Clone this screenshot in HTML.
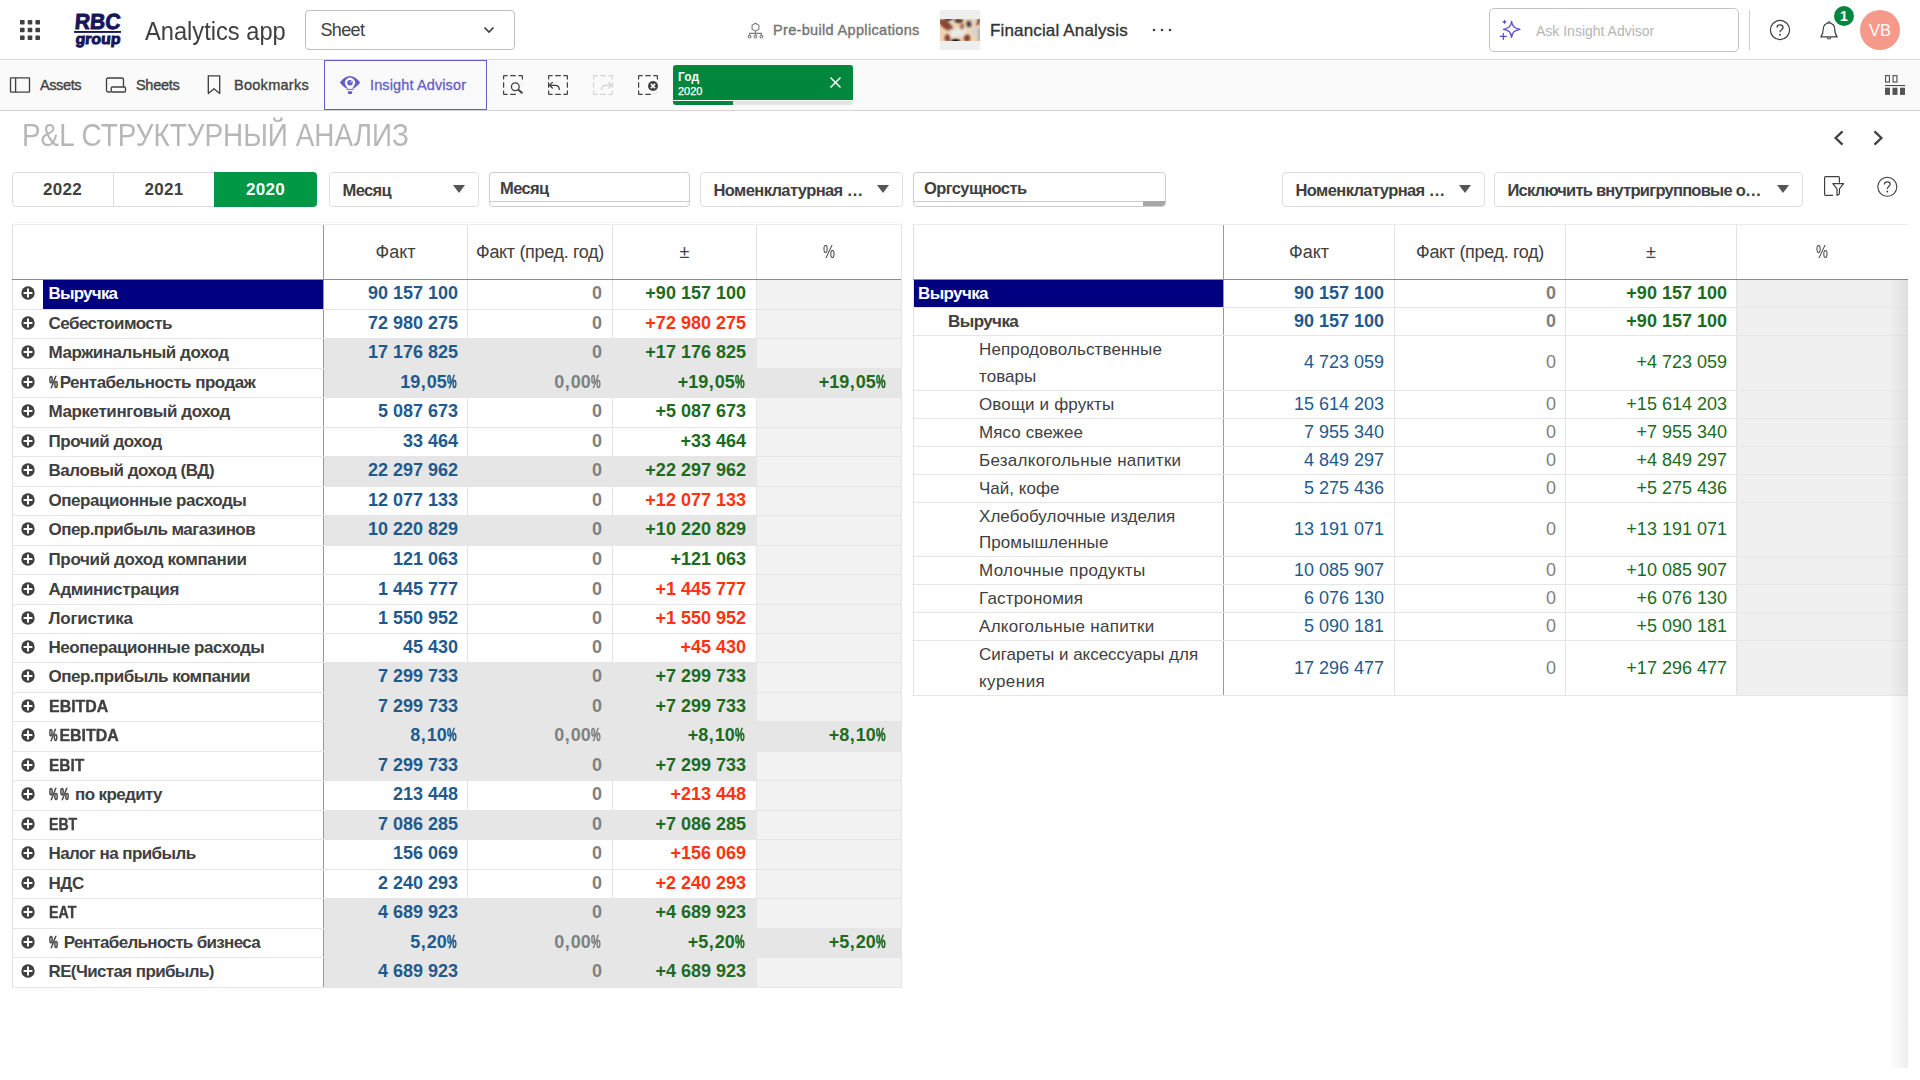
<!DOCTYPE html>
<html lang="ru"><head><meta charset="utf-8"><title>Analytics app</title>
<style>
*{box-sizing:border-box}
html,body{margin:0;padding:0}
body{width:1920px;height:1080px;overflow:hidden;background:#fff;font-family:"Liberation Sans",sans-serif;color:#404040;position:relative}
.abs{position:absolute}
/* ---------- top bar */
#topbar{position:absolute;left:0;top:0;width:1920px;height:60px;background:#fff;border-bottom:1px solid #d9d9d9}
#toolbar{position:absolute;left:0;top:60px;width:1920px;height:51px;background:#fafafa;border-bottom:1px solid #d4d4d4}
.t{position:absolute;white-space:nowrap;line-height:1}
/* ---------- tables */
.tbl{position:absolute;top:223px}
#lt{left:12px;width:890px;height:766px}
#rt{left:913px;width:995px;height:845px;overflow:hidden}
.topline{position:absolute;left:0;top:-1px;width:100%;height:1px;background:#f5f5f5}
.hdr{position:absolute;left:0;top:1px;width:100%;height:56px;border-top:1px solid #ececec;border-bottom:1px solid #8c8c8c}
.hc{position:absolute;top:0;height:54px;display:flex;align-items:center;justify-content:center;font-size:18px;color:#404040}
.hc span{position:relative;top:.5px;letter-spacing:0}
.hb{border-left:1px solid #999}
.hc:first-child{border-left:1px solid #e0e0e0}
.hb2{border-left:1px solid #e3e3e3}
.r{position:absolute;left:0;width:100%;border-bottom:1px solid #e6e6e6}
.c{position:absolute;top:0;bottom:0;padding-bottom:1px;display:flex;align-items:center;white-space:nowrap;font-size:17px}
.c i{display:inline-block;width:5px}
.lab{left:0;border-left:1px solid #e3e3e3;font-weight:bold;color:#404040}
.n1,.n2,.n3,.n4{justify-content:flex-end;font-weight:bold;font-size:18px;letter-spacing:0}
.c s,.lt s{text-decoration:none;display:inline-block;width:10.5px;transform:scaleX(.7);transform-origin:0 50%;letter-spacing:0}
.c s{width:9.6px;transform:scaleX(.6);margin-right:1.6px;-webkit-text-stroke:.55px currentColor}
.lt s{-webkit-text-stroke:.6px currentColor}
.c u{text-decoration:none;margin:0 1px 0 .6px}
.bl{color:#1f5a8e}.gr{color:#808080}.gn{color:#1d6b1d}.rd{color:#ff3311}
/* left table */
#lt .lab{width:311px}
#lt .lab .plus{position:absolute;left:7.5px;top:50%;margin-top:-7.6px;width:14px;height:14px}
#lt .lab .lt{position:absolute;left:35.5px;top:50%;margin-top:-9.6px;line-height:20px;letter-spacing:-.45px}
#lt .navy::before{content:"";position:absolute;left:30px;top:0;right:0;bottom:0;background:#000080}
#lt .navy .lt{color:#fff}
#lt .n1{left:311px;width:144px;border-left:1px solid #999;padding-right:9px}
#lt .n2{left:455px;width:145px;border-left:1px solid #e3e3e3;padding-right:10px}
#lt .n3{left:600px;width:144px;border-left:1px solid #e3e3e3;padding-right:10px}
#lt .n4{left:744px;width:146px;border-left:1px solid #e6e6e6;padding-right:15px;background:#f2f2f2}
#lt .gy .n1,#lt .gy .n2,#lt .gy .n3{background:#e6e6e6;border-left-color:#e6e6e6}
#lt .gy .n1{border-left-color:#999}
#lt .pr .n4{background:#e6e6e6}
/* right table */
#rt .lab{width:310px}
#rt .lab{padding-bottom:0}
#rt .lab .lt{position:relative;top:.5px;line-height:26.5px;font-weight:normal;white-space:nowrap}
#rt .lv0 .lab .lt{left:4px;font-weight:bold;color:#fff;letter-spacing:-.45px}
#rt .lv1 .lab .lt{left:34px;font-weight:bold;letter-spacing:-.45px}
#rt .lv2 .lab .lt{left:65px;letter-spacing:.12px}
#rt .navy{background:#000080}
#rt .n1{left:310px;width:171px;border-left:1px solid #999;padding-right:10px}
#rt .n2{left:481px;width:171px;border-left:1px solid #e3e3e3;padding-right:9px}
#rt .n3{left:652px;width:171px;border-left:1px solid #e3e3e3;padding-right:9px}
#rt .n4{left:823px;width:172px;border-left:1px solid #e3e3e3;background:#f0f0f0}
#rt .lv2 .c{font-weight:normal}
#rt .lv2 .n1,#rt .lv2 .n2,#rt .lv2 .n3{letter-spacing:0}
.shade{position:absolute;right:0;top:57px;width:20px;height:788px;background:linear-gradient(to right,rgba(0,0,0,0),rgba(0,0,0,.065))}
.sb{-webkit-text-stroke:.35px currentColor}
.sb2{-webkit-text-stroke:.3px currentColor}
.yr{font-size:17px;font-weight:bold;text-align:center;letter-spacing:.3px;color:#404040}
.dd,.lb{position:absolute;top:172px;height:35px;border:1px solid #dedede;border-radius:4px;background:#fff}
.lb{border-color:#ccc}
.dd span,.lb span{position:absolute;left:12.5px;top:8.5px;font-size:16.5px;line-height:1;font-weight:bold;color:#404040;white-space:nowrap;letter-spacing:-.6px}
.lb span{left:10px;top:6.5px}
.dd b{position:absolute;right:13.5px;top:12.3px;width:0;height:0;border-left:6px solid transparent;border-right:6px solid transparent;border-top:8px solid #555}
.lb u{position:absolute;left:0;right:0;top:28px;height:1px;background:#ccc}
.lb em{position:absolute;right:0;bottom:0;width:22px;height:5px;background:#a6a6a6;border-radius:0 0 3px 0}
.hc .fp{letter-spacing:-.33px}
.hc .pc{display:inline-block;transform:scaleX(.75)}
.c>span{position:relative}
#lt::after{content:'';position:absolute;left:889px;top:2px;width:1px;height:763px;background:#e3e3e3}

</style></head>
<body>
<div id="topbar">
  <svg class="abs" style="left:20px;top:20px" width="20" height="20" viewBox="0 0 20 20"><g fill="#404040"><rect x="0" y="0" width="4.6" height="4.6" rx=".8"/><rect x="7.7" y="0" width="4.6" height="4.6" rx=".8"/><rect x="15.4" y="0" width="4.6" height="4.6" rx=".8"/><rect x="0" y="7.7" width="4.6" height="4.6" rx=".8"/><rect x="7.7" y="7.7" width="4.6" height="4.6" rx=".8"/><rect x="15.4" y="7.7" width="4.6" height="4.6" rx=".8"/><rect x="0" y="15.4" width="4.6" height="4.6" rx=".8"/><rect x="7.7" y="15.4" width="4.6" height="4.6" rx=".8"/><rect x="15.4" y="15.4" width="4.6" height="4.6" rx=".8"/></g></svg>
  <svg class="abs" id="logo" style="left:72px;top:10px" width="52" height="40" viewBox="0 0 52 40"><g fill="#18165a" font-family="Liberation Sans, sans-serif" font-weight="bold"><text x="3.900" y="18.700" font-size="21.800" textLength="45.600" lengthAdjust="spacingAndGlyphs" stroke="#18165a" stroke-width=".95" transform="skewX(-5)">RBC</text><rect x="2.100" y="21" width="46.900" height="1.900"/><text x="6.100" y="33.700" font-size="15" textLength="45" lengthAdjust="spacingAndGlyphs" stroke="#18165a" stroke-width=".95" transform="skewX(-5)">group</text></g></svg>
  <div class="t" id="appname" style="left:145px;top:19px;font-size:25.400px;color:#404040;transform:scaleX(.932);transform-origin:0 50%">Analytics app</div>
  <div class="abs" style="left:305px;top:10px;width:210px;height:40px;border:1px solid #bfbfbf;border-radius:4px;background:#fff"></div>
  <div class="t" style="left:320.500px;top:21px;font-size:18px;color:#404040;letter-spacing:-.65px">Sheet</div>
  <svg class="abs" style="left:483px;top:25px" width="12" height="10" viewBox="0 0 12 10"><path d="M1.5 2.5L6 7l4.5-4.5" fill="none" stroke="#404040" stroke-width="1.7"/></svg>
  <svg class="abs" style="left:747px;top:22px" width="17" height="17" viewBox="0 0 17 17"><g fill="none" stroke="#7a7a7a" stroke-width="1.1"><path d="M8.5 1.2l3.4 2v3.9l-3.4 2-3.4-2V3.2z"/><path d="M8.5 9.1v2.3M2.6 13.2v-1.8h11.8v1.8M8.5 11.4v1.8"/><circle cx="2.6" cy="14.6" r="1.4"/><circle cx="8.5" cy="14.6" r="1.4"/><circle cx="14.4" cy="14.6" r="1.4"/></g></svg>
  <div class="t sb" style="left:773px;top:23px;font-size:14.5px;color:#737373;letter-spacing:.33px">Pre-build Applications</div>
  <div class="abs" style="left:940px;top:10px;width:40px;height:40px;background:#eee;border-radius:1.5px;overflow:hidden">
    <svg class="abs" style="left:0;top:9px" width="40" height="22" viewBox="0 0 40 22"><defs><filter id="bl" x="-10%" y="-10%" width="120%" height="120%"><feGaussianBlur stdDeviation=".9"/></filter><clipPath id="cp"><rect width="40" height="22"/></clipPath></defs><g clip-path="url(#cp)"><rect width="40" height="22" fill="#efd3b3"/><g filter="url(#bl)"><ellipse cx="6" cy="6" rx="8.500" ry="3.800" transform="rotate(38 6 6)" fill="#8e4533"/><ellipse cx="12" cy="11.500" rx="3.500" ry="2" transform="rotate(25 12 11.500)" fill="#a8603f"/><rect x="5" y="-1" width="8" height="2.600" fill="#2b1815"/><rect x="10" y="9.500" width="16" height="8" fill="#e9e9e9" transform="rotate(-8 18 13)"/><rect x="11.500" y="1.500" width="4" height="3" fill="#dfe3ea"/><ellipse cx="18.500" cy="1.800" rx="4.500" ry="2.300" fill="#5a3a2c"/><ellipse cx="22" cy="7.500" rx="2" ry="3.200" fill="#a56a4e"/><rect x="26.500" y="2" width="5" height="6" rx="1" fill="#4b4a47"/><rect x="31.500" y="1" width="4.500" height="3" fill="#d9d9dc"/><rect x="32" y="8" width="6" height="8" fill="#d6d3d0" transform="rotate(12 35 12)"/><rect x="38" y="9" width="2.500" height="14" fill="#a9a9a9"/><ellipse cx="38.500" cy="2.500" rx="1.600" ry="4.500" transform="rotate(20 38.500 2.500)" fill="#8a4a35"/><ellipse cx="7.500" cy="19" rx="2.900" ry="3.800" fill="#8a4232"/><ellipse cx="27" cy="19" rx="3.200" ry="3.800" fill="#8a4232"/><ellipse cx="15.500" cy="22.300" rx="4.600" ry="2.600" fill="#0b0a16"/></g></g></svg>
  </div>
  <div class="t sb" style="left:990px;top:22px;font-size:17px;color:#333;letter-spacing:.15px">Financial Analysis</div>
  <svg class="abs" style="left:1151px;top:27px" width="22" height="6" viewBox="0 0 22 6"><g fill="#404040"><circle cx="3" cy="3" r="1.3"/><circle cx="11" cy="3" r="1.3"/><circle cx="19" cy="3" r="1.3"/></g></svg>
  <div class="abs" style="left:1489px;top:8px;width:250px;height:44px;border:1px solid #c4c4c4;border-radius:5px;background:#fff"></div>
  <svg class="abs" style="left:1498px;top:18px" width="24" height="24" viewBox="0 0 24 24"><g fill="none" stroke="#5b4fc7" stroke-width="1.250" stroke-linejoin="round" stroke-linecap="round"><path d="M13.600 3.300C14.300 8.300 16.100 10.300 22 11.300C16.100 12.300 14.300 14.300 13.600 19.300C12.900 14.300 11.100 12.300 5.500 11.300C11.100 10.300 12.900 8.300 13.600 3.300Z"/><path d="M5.300 15.400v6M2.300 18.400h6"/></g><path d="M6.500 1.500l.8 1.600 1.600.8-1.600.8-.8 1.600-.8-1.600-1.600-.8 1.600-.8z" fill="#5b4fc7"/></svg>
  <div class="t" style="left:1536px;top:24px;font-size:14px;color:#b5b5b5;letter-spacing:0">Ask Insight Advisor</div>
  <div class="abs" style="left:1749px;top:10px;width:1px;height:40px;background:#d0d0d0"></div>
  <svg class="abs" style="left:1769px;top:19px" width="22" height="22" viewBox="0 0 22 22"><circle cx="11" cy="11" r="9.6" fill="none" stroke="#404040" stroke-width="1.2"/><path d="M8 8.600c0-1.700 1.300-2.700 3-2.700s3 1 3 2.500c0 2.300-3 2.300-3 4.800" fill="none" stroke="#404040" stroke-width="1.3"/><circle cx="11" cy="15.800" r=".95" fill="#404040"/></svg>
  <svg class="abs" style="left:1819px;top:19px" width="20" height="22" viewBox="0 0 20 22"><g fill="none" stroke="#404040" stroke-width="1.2" stroke-linejoin="round"><path d="M1.800 17.800c2-2.200 2.400-4.200 2.400-7.600 0-3.600 2.400-6.200 5.800-6.200s5.800 2.600 5.800 6.200c0 3.400.4 5.400 2.400 7.600z"/><path d="M8.700 4.100c0-1.800 2.600-1.800 2.600 0"/><path d="M8.200 18.200c.3 2.400 3.300 2.400 3.600 0"/></g></svg>
  <div class="abs" style="left:1834px;top:6px;width:20px;height:20px;border-radius:50%;background:#00873d"></div>
  <div class="t" style="left:1834px;top:9px;width:20px;text-align:center;font-size:14px;font-weight:bold;color:#fff">1</div>
  <div class="abs" style="left:1860px;top:10px;width:40px;height:40px;border-radius:50%;background:#f59a8a"></div>
  <div class="t" style="left:1860px;top:22px;width:40px;text-align:center;font-size:16.5px;color:#fff">VB</div>
</div>
<div id="toolbar">
  <svg class="abs" style="left:9px;top:16px" width="22" height="18" viewBox="0 0 22 18"><g fill="none" stroke="#404040" stroke-width="1.350"><rect x="1.5" y="1.900" width="19" height="14.200" rx=".5"/><path d="M6.600 1.900v14.200"/></g></svg>
  <div class="t sb" style="left:40px;top:17.500px;font-size:14.500px;color:#404040;letter-spacing:-.4px">Assets</div>
  <svg class="abs" style="left:105px;top:16px" width="22" height="18" viewBox="0 0 22 18"><g fill="none" stroke="#404040" stroke-width="1.350" stroke-linejoin="round"><path d="M5.800 16H3.200c-1 0-1.700-.7-1.700-1.700V3.700C1.500 2.700 2.200 2 3.200 2h13.600c1 0 1.700.7 1.700 1.700v7"/><rect x="6.200" y="11" width="14.300" height="5" rx="1.200"/></g></svg>
  <div class="t sb" style="left:136px;top:17.500px;font-size:14.500px;color:#404040;letter-spacing:-.3px">Sheets</div>
  <svg class="abs" style="left:206px;top:14px" width="16" height="22" viewBox="0 0 16 22"><path d="M2.300 1.800h11.400v17.800L8 14.800l-5.700 4.800z" fill="none" stroke="#404040" stroke-width="1.350" stroke-linejoin="round"/></svg>
  <div class="t sb" style="left:234px;top:17.500px;font-size:14.500px;color:#404040;letter-spacing:.27px">Bookmarks</div>
  <div class="abs" style="left:324px;top:0;width:163px;height:50px;border:1px solid #655dc6"></div>
  <svg class="abs" style="left:339px;top:15px" width="22" height="20" viewBox="0 0 22 20"><path d="M.9 7.500C3.900 3.300 7.300 1 11 1s7.100 2.300 10.200 6.500c-1.800 2.500-3.900 4.500-6.400 5.800-.4.500-.6 1.100-.7 1.700H7.900c-.1-.6-.3-1.200-.7-1.700C4.700 12 2.700 10 .9 7.500z" fill="#655dc6"/><path d="M8.700 13.800c-.2-1.300-.8-2.100-1.500-3.100a4.800 4.800 0 1 1 7.600 0c-.7 1-1.300 1.800-1.500 3.100z" fill="#fafafa" stroke="#fafafa" stroke-width=".6" stroke-linejoin="round"/><circle cx="11" cy="7.700" r="2.750" fill="#655dc6"/><path d="M11.500 7.200l1.300-1" stroke="#fafafa" stroke-width=".9" stroke-linecap="round"/><path d="M8.700 16.200h4.600l-.5 2.800H9.200z" fill="#655dc6"/></svg>
  <div class="t sb2" style="left:370px;top:18px;font-size:14.5px;color:#655dc6;letter-spacing:.12px">Insight Advisor</div>
  <svg class="abs" style="left:502px;top:14px" width="22" height="22" viewBox="0 0 22 22"><rect x="1.600" y="1.600" width="18.800" height="18.800" fill="none" stroke="#404040" stroke-width="1.200" stroke-dasharray="4 2.600 5.600 2.600 4 0"/><path d="M19.400 7.200h3v15.200h-7.600v-3h4.600z" fill="#fafafa"/><circle cx="13.300" cy="12.700" r="3.850" fill="#fafafa" stroke="#404040" stroke-width="1.300"/><path d="M16.100 15.500l4.300 3.800" stroke="#404040" stroke-width="1.900"/></svg>
  <svg class="abs" style="left:547px;top:14px" width="22" height="22" viewBox="0 0 22 22"><rect x="1.600" y="1.600" width="18.800" height="18.800" fill="none" stroke="#404040" stroke-width="1.200" stroke-dasharray="4 2.600 5.600 2.600 4 0"/><path d="M2.600 11.300h5.800c2.600 0 3.900 1.700 3.900 4.700" fill="none" stroke="#404040" stroke-width="1.300"/><path d="M5.800 8.100l-3.300 3.200 3.300 3.200" fill="none" stroke="#404040" stroke-width="1.300"/><rect x="0" y="13.500" width="8" height="3.500" fill="#fafafa" opacity="0"/></svg>
  <svg class="abs" style="left:592px;top:14px" width="22" height="22" viewBox="0 0 22 22"><rect x="1.600" y="1.600" width="18.800" height="18.800" fill="none" stroke="#d4d4d4" stroke-width="1.200" stroke-dasharray="4 2.600 5.600 2.600 4 0"/><path d="M19.400 11.300h-5.800c-2.600 0-3.900 1.700-3.900 4.700" fill="none" stroke="#d4d4d4" stroke-width="1.300"/><path d="M16.200 8.100l3.300 3.200-3.300 3.200" fill="none" stroke="#d4d4d4" stroke-width="1.300"/></svg>
  <svg class="abs" style="left:637px;top:14px" width="22" height="22" viewBox="0 0 22 22"><rect x="1.600" y="1.600" width="18.800" height="18.800" fill="none" stroke="#404040" stroke-width="1.200" stroke-dasharray="4 2.600 5.600 2.600 4 0"/><path d="M19.400 7.200h3v15.200h-7.600v-3h4.600z" fill="#fafafa"/><circle cx="16" cy="12" r="6.300" fill="#fafafa"/><circle cx="16" cy="12" r="5" fill="#404040"/><path d="M13.900 9.900l4.200 4.200M18.100 9.900l-4.200 4.200" stroke="#fafafa" stroke-width="1.500"/></svg>
  <div class="abs" style="left:673px;top:5px;width:180px;height:40px;border-radius:3px;overflow:hidden;background:#fff">
    <div class="abs" style="left:0;top:0;width:180px;height:34.600px;background:#00873d"></div>
    <div class="abs" style="left:0;top:36px;width:180px;height:4px;background:#e4e4e4"></div>
    <div class="abs" style="left:0;top:36px;width:60px;height:4px;background:#00873d"></div>
  </div>
  <div class="t" style="left:678px;top:11px;font-size:12px;font-weight:bold;color:#fff">Год</div>
  <div class="t" style="left:678px;top:26px;font-size:11px;color:#fff;letter-spacing:0;-webkit-text-stroke:.25px #fff">2020</div>
  <svg class="abs" style="left:829px;top:16px" width="13" height="13" viewBox="0 0 13 13"><path d="M1.500 1.500l10 10M11.500 1.500l-10 10" stroke="#fff" stroke-width="1.500"/></svg>
  <svg class="abs" style="left:1883px;top:14px" width="24" height="22" viewBox="0 0 24 22"><g fill="none" stroke="#4d4d4d" stroke-width="1.100"><rect x="2.550" y="1.650" width="3.900" height="6.400"/><rect x="10.050" y="1.650" width="3.900" height="6.400"/></g><rect x="2" y="11" width="20" height="1.100" fill="#4d4d4d"/><g fill="#555"><rect x="2" y="13.700" width="5" height="7.200"/><rect x="9.500" y="13.700" width="5" height="7.200"/><rect x="17" y="13.700" width="5" height="7.200"/></g></svg>
</div>
<!-- sheet title -->
<div class="t" id="title" style="left:21.500px;top:121px;font-size:30.700px;color:#b7b7b7;transform:scaleX(.909);transform-origin:0 50%">P&amp;L СТРУКТУРНЫЙ АНАЛИЗ</div>
<svg class="abs" style="left:1832px;top:129px" width="14" height="18" viewBox="0 0 14 18"><path d="M10.500 2.300L3.600 9l6.900 6.700" fill="none" stroke="#404040" stroke-width="2.300"/></svg>
<svg class="abs" style="left:1871px;top:129px" width="14" height="18" viewBox="0 0 14 18"><path d="M3.500 2.300L10.400 9l-6.900 6.700" fill="none" stroke="#404040" stroke-width="2.300"/></svg>
<!-- filter row -->
<div class="abs" style="left:12px;top:172px;width:305px;height:35px;border:1px solid #dcdcdc;border-radius:4px;background:#fff"></div>
<div class="abs" style="left:113px;top:172px;width:1px;height:35px;background:#dcdcdc"></div>
<div class="abs" style="left:214px;top:172px;width:103px;height:35px;background:#009845;border-radius:0 4px 4px 0"></div>
<div class="t yr" style="left:12px;top:181px;width:101px">2022</div>
<div class="t yr" style="left:114px;top:181px;width:100px">2021</div>
<div class="t yr" style="left:214px;top:181px;width:103px;color:#fff">2020</div>
<div class="dd" style="left:329px;width:150px"><span>Месяц</span><b></b></div>
<div class="lb" style="left:489px;width:201px"><span>Месяц</span><u></u></div>
<div class="dd" style="left:700px;width:203px"><span>Номенклатурная …</span><b></b></div>
<div class="lb" style="left:913px;width:253px"><span>Оргсущность</span><u></u><em></em></div>
<div class="dd" style="left:1282px;width:203px"><span>Номенклатурная …</span><b></b></div>
<div class="dd" style="left:1494px;width:309px"><span style="letter-spacing:-.75px">Исключить внутригрупповые о…</span><b></b></div>
<svg class="abs" style="left:1822px;top:174px" width="24" height="24" viewBox="0 0 24 24"><path d="M11.200 21.400H3.500c-.5 0-.900-.4-.900-.9V3.500c0-.5.400-.9.900-.9h13c.5 0 .9.400.9.900v5.300" fill="none" stroke="#404040" stroke-width="1.200"/><path d="M10.800 9.700h10.800l-4.200 5.200v5l-2.400 1.500v-6.500z" fill="#fff" stroke="#404040" stroke-width="1.200" stroke-linejoin="round"/></svg>
<svg class="abs" style="left:1876px;top:176px" width="22" height="22" viewBox="0 0 22 22"><circle cx="11.300" cy="10.800" r="9.500" fill="none" stroke="#404040" stroke-width="1.100"/><path d="M8.400 8.500c0-1.700 1.300-2.600 2.900-2.600s2.900.9 2.900 2.400c0 2.200-2.900 2.200-2.900 4.600" fill="none" stroke="#404040" stroke-width="1.200"/><circle cx="11.300" cy="15.500" r=".9" fill="#404040"/></svg>
<div class="tbl" id="lt">
<div class="topline"></div>
<div class="hdr"><div class="hc" style="left:0;width:311px"></div><div class="hc hb" style="left:311px;width:144px"><span>Факт</span></div><div class="hc hb2" style="left:455px;width:145px"><span class="fp">Факт (пред. год)</span></div><div class="hc hb2" style="left:600px;width:144px"><span class="pm">±</span></div><div class="hc hb2" style="left:744px;width:146px"><span class="pc">%</span></div></div>
<div class="r" style="top:57px;height:30px"><div class="c lab navy"><svg class="plus" style="margin-top:-8.6px" viewBox="0 0 14 14"><circle cx="7" cy="7" r="6.700" fill="#404040"/><path d="M2.600 7h8.800M7 2.600v8.800" stroke="#fff" stroke-width="2"/></svg><span class="lt" style="margin-top:-10.6px"><span style="letter-spacing:-0.78px">Выручка</span></span></div><div class="c n1 bl"><span style="top:-1px">90<i></i>157<i></i>100</span></div><div class="c n2 gr"><span style="top:-1px">0</span></div><div class="c n3 gn"><span style="top:-1px">+90<i></i>157<i></i>100</span></div><div class="c n4 gn"><span style="top:-1px"></span></div></div>
<div class="r" style="top:87px;height:29px"><div class="c lab"><svg class="plus" viewBox="0 0 14 14"><circle cx="7" cy="7" r="6.700" fill="#404040"/><path d="M2.600 7h8.800M7 2.600v8.800" stroke="#fff" stroke-width="2"/></svg><span class="lt"><span style="letter-spacing:-0.53px">Себестоимость</span></span></div><div class="c n1 bl"><span>72<i></i>980<i></i>275</span></div><div class="c n2 gr"><span>0</span></div><div class="c n3 rd"><span>+72<i></i>980<i></i>275</span></div><div class="c n4 gn"><span></span></div></div>
<div class="r gy" style="top:116px;height:30px"><div class="c lab"><svg class="plus" style="margin-top:-8.6px" viewBox="0 0 14 14"><circle cx="7" cy="7" r="6.700" fill="#404040"/><path d="M2.600 7h8.800M7 2.600v8.800" stroke="#fff" stroke-width="2"/></svg><span class="lt" style="margin-top:-10.6px"><span style="letter-spacing:-0.45px">Маржинальный доход</span></span></div><div class="c n1 bl"><span style="top:-1px">17<i></i>176<i></i>825</span></div><div class="c n2 gr"><span style="top:-1px">0</span></div><div class="c n3 gn"><span style="top:-1px">+17<i></i>176<i></i>825</span></div><div class="c n4 gn"><span style="top:-1px"></span></div></div>
<div class="r gy pr" style="top:146px;height:29px"><div class="c lab"><svg class="plus" viewBox="0 0 14 14"><circle cx="7" cy="7" r="6.700" fill="#404040"/><path d="M2.600 7h8.800M7 2.600v8.800" stroke="#fff" stroke-width="2"/></svg><span class="lt"><span style="letter-spacing:-0.50px"><s>%</s>Рентабельность продаж</span></span></div><div class="c n1 bl"><span>19<u>,</u>05<s>%</s></span></div><div class="c n2 gr"><span>0<u>,</u>00<s>%</s></span></div><div class="c n3 gn"><span>+19<u>,</u>05<s>%</s></span></div><div class="c n4 gn"><span>+19<u>,</u>05<s>%</s></span></div></div>
<div class="r" style="top:175px;height:30px"><div class="c lab"><svg class="plus" style="margin-top:-8.6px" viewBox="0 0 14 14"><circle cx="7" cy="7" r="6.700" fill="#404040"/><path d="M2.600 7h8.800M7 2.600v8.800" stroke="#fff" stroke-width="2"/></svg><span class="lt" style="margin-top:-10.6px"><span style="letter-spacing:-0.40px">Маркетинговый доход</span></span></div><div class="c n1 bl"><span style="top:-1px">5<i></i>087<i></i>673</span></div><div class="c n2 gr"><span style="top:-1px">0</span></div><div class="c n3 gn"><span style="top:-1px">+5<i></i>087<i></i>673</span></div><div class="c n4 gn"><span style="top:-1px"></span></div></div>
<div class="r" style="top:205px;height:29px"><div class="c lab"><svg class="plus" viewBox="0 0 14 14"><circle cx="7" cy="7" r="6.700" fill="#404040"/><path d="M2.600 7h8.800M7 2.600v8.800" stroke="#fff" stroke-width="2"/></svg><span class="lt"><span style="letter-spacing:-0.45px">Прочий доход</span></span></div><div class="c n1 bl"><span>33<i></i>464</span></div><div class="c n2 gr"><span>0</span></div><div class="c n3 gn"><span>+33<i></i>464</span></div><div class="c n4 gn"><span></span></div></div>
<div class="r gy" style="top:234px;height:30px"><div class="c lab"><svg class="plus" style="margin-top:-8.6px" viewBox="0 0 14 14"><circle cx="7" cy="7" r="6.700" fill="#404040"/><path d="M2.600 7h8.800M7 2.600v8.800" stroke="#fff" stroke-width="2"/></svg><span class="lt" style="margin-top:-10.6px"><span style="letter-spacing:-0.45px">Валовый доход (ВД)</span></span></div><div class="c n1 bl"><span style="top:-1px">22<i></i>297<i></i>962</span></div><div class="c n2 gr"><span style="top:-1px">0</span></div><div class="c n3 gn"><span style="top:-1px">+22<i></i>297<i></i>962</span></div><div class="c n4 gn"><span style="top:-1px"></span></div></div>
<div class="r" style="top:264px;height:29px"><div class="c lab"><svg class="plus" viewBox="0 0 14 14"><circle cx="7" cy="7" r="6.700" fill="#404040"/><path d="M2.600 7h8.800M7 2.600v8.800" stroke="#fff" stroke-width="2"/></svg><span class="lt"><span style="letter-spacing:-0.45px">Операционные расходы</span></span></div><div class="c n1 bl"><span>12<i></i>077<i></i>133</span></div><div class="c n2 gr"><span>0</span></div><div class="c n3 rd"><span>+12<i></i>077<i></i>133</span></div><div class="c n4 gn"><span></span></div></div>
<div class="r gy" style="top:293px;height:30px"><div class="c lab"><svg class="plus" style="margin-top:-8.6px" viewBox="0 0 14 14"><circle cx="7" cy="7" r="6.700" fill="#404040"/><path d="M2.600 7h8.800M7 2.600v8.800" stroke="#fff" stroke-width="2"/></svg><span class="lt" style="margin-top:-10.6px"><span style="letter-spacing:-0.55px">Опер.прибыль магазинов</span></span></div><div class="c n1 bl"><span style="top:-1px">10<i></i>220<i></i>829</span></div><div class="c n2 gr"><span style="top:-1px">0</span></div><div class="c n3 gn"><span style="top:-1px">+10<i></i>220<i></i>829</span></div><div class="c n4 gn"><span style="top:-1px"></span></div></div>
<div class="r" style="top:323px;height:29px"><div class="c lab"><svg class="plus" viewBox="0 0 14 14"><circle cx="7" cy="7" r="6.700" fill="#404040"/><path d="M2.600 7h8.800M7 2.600v8.800" stroke="#fff" stroke-width="2"/></svg><span class="lt"><span style="letter-spacing:-0.35px">Прочий доход компании</span></span></div><div class="c n1 bl"><span>121<i></i>063</span></div><div class="c n2 gr"><span>0</span></div><div class="c n3 gn"><span>+121<i></i>063</span></div><div class="c n4 gn"><span></span></div></div>
<div class="r" style="top:352px;height:30px"><div class="c lab"><svg class="plus" viewBox="0 0 14 14"><circle cx="7" cy="7" r="6.700" fill="#404040"/><path d="M2.600 7h8.800M7 2.600v8.800" stroke="#fff" stroke-width="2"/></svg><span class="lt"><span style="letter-spacing:-0.37px">Администрация</span></span></div><div class="c n1 bl"><span>1<i></i>445<i></i>777</span></div><div class="c n2 gr"><span>0</span></div><div class="c n3 rd"><span>+1<i></i>445<i></i>777</span></div><div class="c n4 gn"><span></span></div></div>
<div class="r" style="top:382px;height:29px"><div class="c lab"><svg class="plus" viewBox="0 0 14 14"><circle cx="7" cy="7" r="6.700" fill="#404040"/><path d="M2.600 7h8.800M7 2.600v8.800" stroke="#fff" stroke-width="2"/></svg><span class="lt"><span style="letter-spacing:-0.20px">Логистика</span></span></div><div class="c n1 bl"><span>1<i></i>550<i></i>952</span></div><div class="c n2 gr"><span>0</span></div><div class="c n3 rd"><span>+1<i></i>550<i></i>952</span></div><div class="c n4 gn"><span></span></div></div>
<div class="r" style="top:411px;height:29px"><div class="c lab"><svg class="plus" viewBox="0 0 14 14"><circle cx="7" cy="7" r="6.700" fill="#404040"/><path d="M2.600 7h8.800M7 2.600v8.800" stroke="#fff" stroke-width="2"/></svg><span class="lt"><span style="letter-spacing:-0.45px">Неоперационные расходы</span></span></div><div class="c n1 bl"><span>45<i></i>430</span></div><div class="c n2 gr"><span>0</span></div><div class="c n3 rd"><span>+45<i></i>430</span></div><div class="c n4 gn"><span></span></div></div>
<div class="r gy" style="top:440px;height:30px"><div class="c lab"><svg class="plus" style="margin-top:-8.6px" viewBox="0 0 14 14"><circle cx="7" cy="7" r="6.700" fill="#404040"/><path d="M2.600 7h8.800M7 2.600v8.800" stroke="#fff" stroke-width="2"/></svg><span class="lt" style="margin-top:-10.6px"><span style="letter-spacing:-0.50px">Опер.прибыль компании</span></span></div><div class="c n1 bl"><span style="top:-1px">7<i></i>299<i></i>733</span></div><div class="c n2 gr"><span style="top:-1px">0</span></div><div class="c n3 gn"><span style="top:-1px">+7<i></i>299<i></i>733</span></div><div class="c n4 gn"><span style="top:-1px"></span></div></div>
<div class="r gy" style="top:470px;height:29px"><div class="c lab"><svg class="plus" viewBox="0 0 14 14"><circle cx="7" cy="7" r="6.700" fill="#404040"/><path d="M2.600 7h8.800M7 2.600v8.800" stroke="#fff" stroke-width="2"/></svg><span class="lt"><span style="display:inline-block;letter-spacing:0;transform:scaleX(0.938);transform-origin:0 50%;-webkit-text-stroke:.4px currentColor">EBITDA</span></span></div><div class="c n1 bl"><span>7<i></i>299<i></i>733</span></div><div class="c n2 gr"><span>0</span></div><div class="c n3 gn"><span>+7<i></i>299<i></i>733</span></div><div class="c n4 gn"><span></span></div></div>
<div class="r gy pr" style="top:499px;height:30px"><div class="c lab"><svg class="plus" style="margin-top:-8.6px" viewBox="0 0 14 14"><circle cx="7" cy="7" r="6.700" fill="#404040"/><path d="M2.600 7h8.800M7 2.600v8.800" stroke="#fff" stroke-width="2"/></svg><span class="lt" style="margin-top:-10.6px"><span style="display:inline-block;letter-spacing:0;transform:scaleX(0.936);transform-origin:0 50%;-webkit-text-stroke:.4px currentColor"><s>%</s>EBITDA</span></span></div><div class="c n1 bl"><span style="top:-1px">8<u>,</u>10<s>%</s></span></div><div class="c n2 gr"><span style="top:-1px">0<u>,</u>00<s>%</s></span></div><div class="c n3 gn"><span style="top:-1px">+8<u>,</u>10<s>%</s></span></div><div class="c n4 gn"><span style="top:-1px">+8<u>,</u>10<s>%</s></span></div></div>
<div class="r gy" style="top:529px;height:29px"><div class="c lab"><svg class="plus" viewBox="0 0 14 14"><circle cx="7" cy="7" r="6.700" fill="#404040"/><path d="M2.600 7h8.800M7 2.600v8.800" stroke="#fff" stroke-width="2"/></svg><span class="lt"><span style="display:inline-block;letter-spacing:0;transform:scaleX(0.912);transform-origin:0 50%;-webkit-text-stroke:.4px currentColor">EBIT</span></span></div><div class="c n1 bl"><span>7<i></i>299<i></i>733</span></div><div class="c n2 gr"><span>0</span></div><div class="c n3 gn"><span>+7<i></i>299<i></i>733</span></div><div class="c n4 gn"><span></span></div></div>
<div class="r" style="top:558px;height:30px"><div class="c lab"><svg class="plus" style="margin-top:-8.6px" viewBox="0 0 14 14"><circle cx="7" cy="7" r="6.700" fill="#404040"/><path d="M2.600 7h8.800M7 2.600v8.800" stroke="#fff" stroke-width="2"/></svg><span class="lt" style="margin-top:-10.6px"><span style="letter-spacing:-0.62px"><s>%</s><s>%</s> по кредиту</span></span></div><div class="c n1 bl"><span style="top:-1px">213<i></i>448</span></div><div class="c n2 gr"><span style="top:-1px">0</span></div><div class="c n3 rd"><span style="top:-1px">+213<i></i>448</span></div><div class="c n4 gn"><span style="top:-1px"></span></div></div>
<div class="r gy" style="top:588px;height:29px"><div class="c lab"><svg class="plus" viewBox="0 0 14 14"><circle cx="7" cy="7" r="6.700" fill="#404040"/><path d="M2.600 7h8.800M7 2.600v8.800" stroke="#fff" stroke-width="2"/></svg><span class="lt"><span style="display:inline-block;letter-spacing:0;transform:scaleX(0.829);transform-origin:0 50%;-webkit-text-stroke:.4px currentColor">EBT</span></span></div><div class="c n1 bl"><span>7<i></i>086<i></i>285</span></div><div class="c n2 gr"><span>0</span></div><div class="c n3 gn"><span>+7<i></i>086<i></i>285</span></div><div class="c n4 gn"><span></span></div></div>
<div class="r" style="top:617px;height:30px"><div class="c lab"><svg class="plus" style="margin-top:-8.6px" viewBox="0 0 14 14"><circle cx="7" cy="7" r="6.700" fill="#404040"/><path d="M2.600 7h8.800M7 2.600v8.800" stroke="#fff" stroke-width="2"/></svg><span class="lt" style="margin-top:-10.6px"><span style="letter-spacing:-0.58px">Налог на прибыль</span></span></div><div class="c n1 bl"><span style="top:-1px">156<i></i>069</span></div><div class="c n2 gr"><span style="top:-1px">0</span></div><div class="c n3 rd"><span style="top:-1px">+156<i></i>069</span></div><div class="c n4 gn"><span style="top:-1px"></span></div></div>
<div class="r" style="top:647px;height:29px"><div class="c lab"><svg class="plus" viewBox="0 0 14 14"><circle cx="7" cy="7" r="6.700" fill="#404040"/><path d="M2.600 7h8.800M7 2.600v8.800" stroke="#fff" stroke-width="2"/></svg><span class="lt"><span style="letter-spacing:-0.45px">НДС</span></span></div><div class="c n1 bl"><span>2<i></i>240<i></i>293</span></div><div class="c n2 gr"><span>0</span></div><div class="c n3 rd"><span>+2<i></i>240<i></i>293</span></div><div class="c n4 gn"><span></span></div></div>
<div class="r gy" style="top:676px;height:30px"><div class="c lab"><svg class="plus" style="margin-top:-8.6px" viewBox="0 0 14 14"><circle cx="7" cy="7" r="6.700" fill="#404040"/><path d="M2.600 7h8.800M7 2.600v8.800" stroke="#fff" stroke-width="2"/></svg><span class="lt" style="margin-top:-10.6px"><span style="display:inline-block;letter-spacing:0;transform:scaleX(0.836);transform-origin:0 50%;-webkit-text-stroke:.4px currentColor">EAT</span></span></div><div class="c n1 bl"><span style="top:-1px">4<i></i>689<i></i>923</span></div><div class="c n2 gr"><span style="top:-1px">0</span></div><div class="c n3 gn"><span style="top:-1px">+4<i></i>689<i></i>923</span></div><div class="c n4 gn"><span style="top:-1px"></span></div></div>
<div class="r gy pr" style="top:706px;height:29px"><div class="c lab"><svg class="plus" viewBox="0 0 14 14"><circle cx="7" cy="7" r="6.700" fill="#404040"/><path d="M2.600 7h8.800M7 2.600v8.800" stroke="#fff" stroke-width="2"/></svg><span class="lt"><span style="letter-spacing:-0.67px"><s>%</s> Рентабельность бизнеса</span></span></div><div class="c n1 bl"><span>5<u>,</u>20<s>%</s></span></div><div class="c n2 gr"><span>0<u>,</u>00<s>%</s></span></div><div class="c n3 gn"><span>+5<u>,</u>20<s>%</s></span></div><div class="c n4 gn"><span>+5<u>,</u>20<s>%</s></span></div></div>
<div class="r gy" style="top:735px;height:30px"><div class="c lab"><svg class="plus" style="margin-top:-8.6px" viewBox="0 0 14 14"><circle cx="7" cy="7" r="6.700" fill="#404040"/><path d="M2.600 7h8.800M7 2.600v8.800" stroke="#fff" stroke-width="2"/></svg><span class="lt" style="margin-top:-10.6px"><span style="letter-spacing:-0.63px">RE(Чистая прибыль)</span></span></div><div class="c n1 bl"><span style="top:-1px">4<i></i>689<i></i>923</span></div><div class="c n2 gr"><span style="top:-1px">0</span></div><div class="c n3 gn"><span style="top:-1px">+4<i></i>689<i></i>923</span></div><div class="c n4 gn"><span style="top:-1px"></span></div></div>
</div>
<div class="tbl" id="rt">
<div class="topline"></div>
<div class="hdr"><div class="hc" style="left:0;width:310px"></div><div class="hc hb" style="left:310px;width:171px"><span>Факт</span></div><div class="hc hb2" style="left:481px;width:171px"><span class="fp">Факт (пред. год)</span></div><div class="hc hb2" style="left:652px;width:171px"><span class="pm">±</span></div><div class="hc hb2" style="left:823px;width:172px"><span class="pc">%</span></div></div>
<div class="r lv0" style="top:57px;height:28px"><div class="c lab navy"><span class="lt"><span style="letter-spacing:-0.62px">Выручка</span></span></div><div class="c n1 bl"><span>90<i></i>157<i></i>100</span></div><div class="c n2 gr"><span>0</span></div><div class="c n3 gn"><span>+90<i></i>157<i></i>100</span></div><div class="c n4"></div></div>
<div class="r lv1" style="top:85px;height:28px"><div class="c lab"><span class="lt"><span style="letter-spacing:-0.58px">Выручка</span></span></div><div class="c n1 bl"><span>90<i></i>157<i></i>100</span></div><div class="c n2 gr"><span>0</span></div><div class="c n3 gn"><span>+90<i></i>157<i></i>100</span></div><div class="c n4"></div></div>
<div class="r lv2" style="top:113px;height:55px"><div class="c lab"><span class="lt"><span style="letter-spacing:0.13px">Непродовольственные</span><br><span style="letter-spacing:0.04px">товары</span></span></div><div class="c n1 bl"><span>4<i></i>723<i></i>059</span></div><div class="c n2 gr"><span>0</span></div><div class="c n3 gn"><span>+4<i></i>723<i></i>059</span></div><div class="c n4"></div></div>
<div class="r lv2" style="top:168px;height:28px"><div class="c lab"><span class="lt"><span style="letter-spacing:0.15px">Овощи и фрукты</span></span></div><div class="c n1 bl"><span>15<i></i>614<i></i>203</span></div><div class="c n2 gr"><span>0</span></div><div class="c n3 gn"><span>+15<i></i>614<i></i>203</span></div><div class="c n4"></div></div>
<div class="r lv2" style="top:196px;height:28px"><div class="c lab"><span class="lt"><span style="letter-spacing:0.08px">Мясо свежее</span></span></div><div class="c n1 bl"><span>7<i></i>955<i></i>340</span></div><div class="c n2 gr"><span>0</span></div><div class="c n3 gn"><span>+7<i></i>955<i></i>340</span></div><div class="c n4"></div></div>
<div class="r lv2" style="top:224px;height:28px"><div class="c lab"><span class="lt"><span style="letter-spacing:0.28px">Безалкогольные напитки</span></span></div><div class="c n1 bl"><span>4<i></i>849<i></i>297</span></div><div class="c n2 gr"><span>0</span></div><div class="c n3 gn"><span>+4<i></i>849<i></i>297</span></div><div class="c n4"></div></div>
<div class="r lv2" style="top:252px;height:28px"><div class="c lab"><span class="lt"><span style="letter-spacing:0.02px">Чай, кофе</span></span></div><div class="c n1 bl"><span>5<i></i>275<i></i>436</span></div><div class="c n2 gr"><span>0</span></div><div class="c n3 gn"><span>+5<i></i>275<i></i>436</span></div><div class="c n4"></div></div>
<div class="r lv2" style="top:280px;height:54px"><div class="c lab"><span class="lt"><span style="letter-spacing:0.04px">Хлебобулочные изделия</span><br><span style="letter-spacing:0.08px">Промышленные</span></span></div><div class="c n1 bl"><span>13<i></i>191<i></i>071</span></div><div class="c n2 gr"><span>0</span></div><div class="c n3 gn"><span>+13<i></i>191<i></i>071</span></div><div class="c n4"></div></div>
<div class="r lv2" style="top:334px;height:28px"><div class="c lab"><span class="lt"><span style="letter-spacing:0.32px">Молочные продукты</span></span></div><div class="c n1 bl"><span>10<i></i>085<i></i>907</span></div><div class="c n2 gr"><span>0</span></div><div class="c n3 gn"><span>+10<i></i>085<i></i>907</span></div><div class="c n4"></div></div>
<div class="r lv2" style="top:362px;height:28px"><div class="c lab"><span class="lt"><span style="letter-spacing:0.18px">Гастрономия</span></span></div><div class="c n1 bl"><span>6<i></i>076<i></i>130</span></div><div class="c n2 gr"><span>0</span></div><div class="c n3 gn"><span>+6<i></i>076<i></i>130</span></div><div class="c n4"></div></div>
<div class="r lv2" style="top:390px;height:28px"><div class="c lab"><span class="lt"><span style="letter-spacing:0.29px">Алкогольные напитки</span></span></div><div class="c n1 bl"><span>5<i></i>090<i></i>181</span></div><div class="c n2 gr"><span>0</span></div><div class="c n3 gn"><span>+5<i></i>090<i></i>181</span></div><div class="c n4"></div></div>
<div class="r lv2" style="top:418px;height:55px"><div class="c lab"><span class="lt"><span style="letter-spacing:-0.02px">Сигареты и аксессуары для</span><br><span style="letter-spacing:0.48px">курения</span></span></div><div class="c n1 bl"><span style="top:1px">17<i></i>296<i></i>477</span></div><div class="c n2 gr"><span style="top:1px">0</span></div><div class="c n3 gn"><span style="top:1px">+17<i></i>296<i></i>477</span></div><div class="c n4"></div></div>
<div class="shade"></div>
</div>
</body></html>
